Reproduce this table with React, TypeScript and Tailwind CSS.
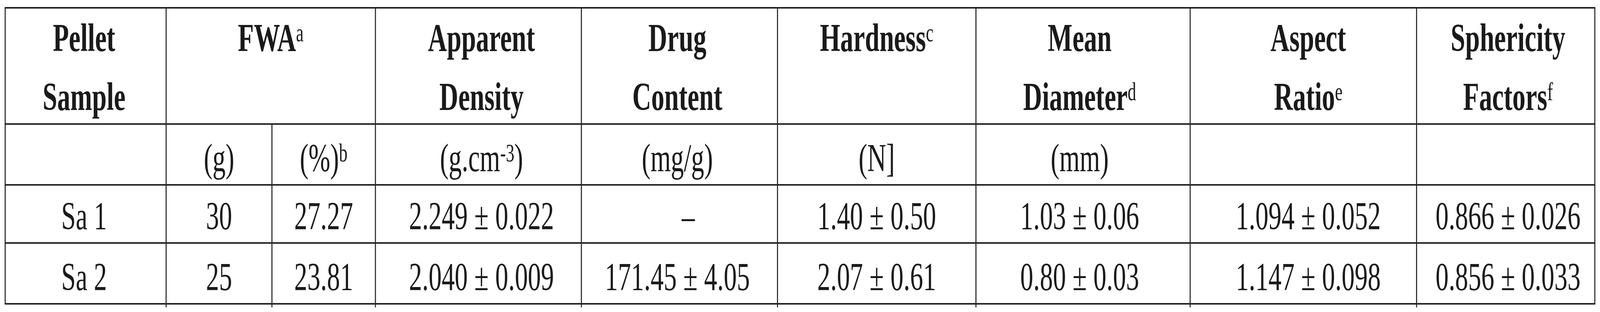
import React, { useEffect, useState } from 'react';

// the table is drawn on a 6184px wide sheet, squeezed to the window width if it is narrower
const SHEET_W = 6184;

// horizontal nudges per column, so the text sits where the print put it
const shifts = [
  'pr-[12px]',
  '',
  '',
  'pl-[24px]',
  'pr-[16px]',
  '',
  'pr-[26px]',
  'pl-[38px]',
  'pl-[18px]',
];

const Sup = ({ children }: { children: React.ReactNode }) => (
  <span className="relative -top-[25px] text-[66px] leading-none font-normal">{children}</span>
);

const HeadCell = ({
  col,
  span,
  children,
}: {
  col: number;
  span?: boolean;
  children: React.ReactNode;
}) => (
  <div
    className={`${span ? 'col-span-2' : ''} ${col === 0 ? 'border-l-4' : ''} ${
      span ? '' : shifts[col]
    } border-r-4 border-b-4 border-[#222] text-center font-bold leading-[151px]`}
  >
    {children}
  </div>
);

const BodyCell = ({
  col,
  extra,
  children,
}: {
  col: number;
  extra?: string;
  children?: React.ReactNode;
}) => (
  <div
    className={`${col === 0 ? 'border-l-4' : ''} ${
      extra ?? shifts[col]
    } flex items-end justify-center border-r-4 border-b-4 border-[#222] pb-[17px] leading-[100px]`}
  >
    <span>{children}</span>
  </div>
);

const units: React.ReactNode[] = [
  '',
  '(g)',
  <>
    (%)<Sup>b</Sup>
  </>,
  <>
    (g.cm<Sup>-3</Sup>)
  </>,
  '(mg/g)',
  '(N]',
  '(mm)',
  '',
  '',
];

const rows = [
  ['Sa 1', '30', '27.27', '2.249 ± 0.022', '–', '1.40 ± 0.50', '1.03 ± 0.06', '1.094 ± 0.052', '0.866 ± 0.026'],
  ['Sa 2', '25', '23.81', '2.040 ± 0.009', '171.45 ± 4.05', '2.07 ± 0.61', '0.80 ± 0.03', '1.147 ± 0.098', '0.856 ± 0.033'],
];

const fitScale = () => Math.min(1, window.innerWidth / SHEET_W);

export default function App() {
  const [scale, setScale] = useState(fitScale);

  useEffect(() => {
    const onResize = () => setScale(fitScale());
    window.addEventListener('resize', onResize);
    return () => window.removeEventListener('resize', onResize);
  }, []);

  return (
    <div className="h-[800px] w-full overflow-hidden bg-white">
      <div
        className="h-[800px] w-[6184px] origin-top-left font-['Liberation_Serif',serif] text-[101px] text-[#1a1a1a]"
        style={{ transform: `scaleX(${scale})` }}
      >
        <div className="ml-[18px] pt-[18px]">
          <div className="grid w-[6148px] grid-cols-[626px_409px_400px_796px_758px_767px_828px_875px_689px] grid-rows-[298px_156px_149px_156px_7px] border-t-4 border-[#222]">
            <HeadCell col={0}>
              Pellet
              <br />
              Sample
            </HeadCell>
            <HeadCell col={1} span>
              FWA<Sup>a</Sup>
            </HeadCell>
            <HeadCell col={3}>
              Apparent
              <br />
              Density
            </HeadCell>
            <HeadCell col={4}>
              Drug
              <br />
              Content
            </HeadCell>
            <HeadCell col={5}>
              Hardness<Sup>c</Sup>
            </HeadCell>
            <HeadCell col={6}>
              Mean
              <br />
              Diameter<Sup>d</Sup>
            </HeadCell>
            <HeadCell col={7}>
              Aspect
              <br />
              Ratio<Sup>e</Sup>
            </HeadCell>
            <HeadCell col={8}>
              Sphericity
              <br />
              Factors<Sup>f</Sup>
            </HeadCell>

            {units.map((u, i) => (
              <BodyCell key={`u${i}`} col={i}>
                {u}
              </BodyCell>
            ))}

            {rows.map((row, r) =>
              row.map((v, i) => (
                <BodyCell key={`r${r}-${i}`} col={i} extra={v === '–' ? 'pl-[68px]' : undefined}>
                  {v}
                </BodyCell>
              ))
            )}

            {/* short stubs of the inner rules below the last row */}
            {shifts.map((_, i) => (
              <div key={`s${i}`} className={i < 8 ? 'border-r-4 border-[#222]' : ''} />
            ))}
          </div>
        </div>
      </div>
    </div>
  );
}
